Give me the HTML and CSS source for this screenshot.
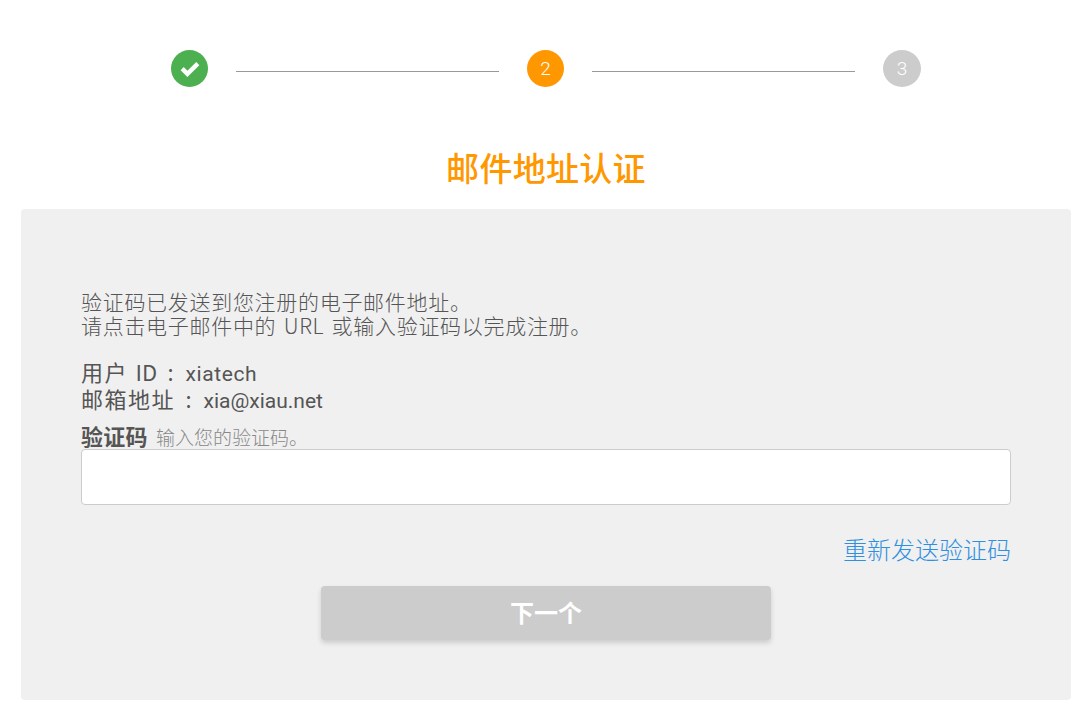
FILE: index.html
```html
<!DOCTYPE html>
<html lang="zh-CN">
<head>
<meta charset="utf-8">
<title>邮件地址认证</title>
<link rel="stylesheet" href="styles.css">
</head>
<body>
<main class="page">
  <ol class="steps">
    <li class="step step-done">
      <svg class="check" viewBox="0 0 20 16" width="20" height="16" aria-hidden="true"><path d="M2.2 7.6 7.4 12.8 17.8 2.6" fill="none" stroke="#fff" stroke-width="4.4"/></svg>
    </li>
    <li class="step-line"></li>
    <li class="step step-current">2</li>
    <li class="step-line"></li>
    <li class="step step-todo">3</li>
  </ol>
  <h1 class="title">邮件地址认证</h1>
  <section class="panel">
    <p class="intro">验证码已发送到您注册的电子邮件地址。<br>请点击电子邮件中的 URL 或输入验证码以完成注册。</p>
    <p class="account">用户 <span class="id-label">ID</span> <span class="sep">:</span> <span class="id-value">xiatech</span><br>邮箱地址 <span class="sep">:</span> <span class="mail-value">xia@xiau.net</span></p>
    <label class="field-label" for="code"><strong class="label-main">验证码</strong><span class="label-hint">输入您的验证码。</span></label>
    <input class="code-input" id="code" type="text">
    <div class="resend-row"><a class="resend" href="#">重新发送验证码</a></div>
    <div class="actions"><button class="next" type="button">下一个</button></div>
  </section>
</main>
</body>
</html>
```
FILE: styles.css
```css
* { box-sizing: border-box; }
html, body { margin: 0; background: #fff; }
body {
  font-family: "Noto Sans CJK SC", "Noto Sans CJK JP", sans-serif;
  color: #555;
}
.page { width: 1050px; margin-left: 21px; padding-top: 50px; }
.steps {
  list-style: none;
  margin: 0 auto;
  padding: 0;
  width: 750px;
  height: 37px;
  display: flex;
  align-items: flex-start;
  gap: 28px;
}
.step {
  flex: none;
  width: 37px;
  height: 37px;
  border-radius: 50%;
  color: #fff;
  display: flex;
  align-items: center;
  justify-content: center;
  font-family: Roboto, sans-serif;
  font-weight: 300;
  font-size: 19px;
}
.step-todo { width: 38px; }
.step-done { background: #4caf50; }
.step-current { background: #ff9800; }
.step-todo { background: #ccc; }
.step-line { flex: 1; height: 1px; margin-top: 21px; background: #999; }
.check { display: block; }
.title {
  margin: 59px 0 21px;
  height: 42px;
  text-align: center;
  font-size: 33px;
  line-height: 42px;
  letter-spacing: 0.3px;
  font-weight: 500;
  color: #ff9800;
}
.panel {
  height: 491px;
  background: #f0f0f0;
  border-radius: 4px;
  padding: 80px 60px 0;
}
.intro {
  margin: 0;
  font-size: 21px;
  line-height: 24px;
  font-weight: 300;
  letter-spacing: 0.7px;
  word-spacing: 2px;
  color: #555;
}
.account {
  margin: 21px 0 0;
  font-size: 22px;
  line-height: 26px;
  font-weight: 400;
  letter-spacing: 1.5px;
  word-spacing: 1px;
  color: #555;
}
.id-label { letter-spacing: 0; }
.sep { margin: 0 3px; }
.id-value, .mail-value { font-family: Roboto, sans-serif; font-size: 21px; line-height: 1; }
.id-value { letter-spacing: 0.6px; }
.mail-value { letter-spacing: 0; }
.field-label { display: flex; align-items: baseline; gap: 8px; margin-top: 11px; height: 26px; line-height: 25px; }
.label-main { font-size: 22px; font-weight: 700; letter-spacing: 0.3px; color: #555; }
.label-hint { font-size: 19px; font-weight: 300; color: #888; }
.code-input {
  display: block;
  width: 930px;
  height: 56px;
  border: 1px solid #ccc;
  border-radius: 4px;
  background: #fff;
}
.resend-row { margin-top: 29px; text-align: right; line-height: 30px; }
.resend { font-size: 24px; font-weight: 300; color: #2f8fe0; text-decoration: none; }
.actions { margin-top: 19px; display: flex; justify-content: center; }
.next {
  width: 450px;
  height: 54px;
  padding: 0 0 4px;
  border: 0;
  border-radius: 4px;
  background: #ccc;
  color: #fff;
  font-family: inherit;
  font-size: 24px;
  font-weight: 700;
  box-shadow: 0 3px 5px rgba(0,0,0,.15);
}
```
